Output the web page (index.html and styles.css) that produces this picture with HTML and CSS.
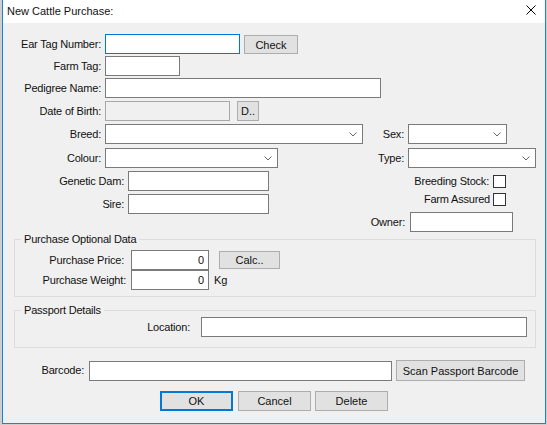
FILE: index.html
```html
<!DOCTYPE html>
<html>
<head>
<meta charset="utf-8">
<title>New Cattle Purchase</title>
<link rel="stylesheet" href="styles.css">
</head>
<body>
<div class="window">
  <div class="titlebar">
    <span class="title">New Cattle Purchase:</span>
    <svg class="close" width="10" height="10" viewBox="0 0 10 10"><path d="M0.5 0.5 L9.5 9.5 M9.5 0.5 L0.5 9.5" stroke="#000" stroke-width="1" fill="none"/></svg>
  </div>
  <div class="content">
    <div class="row r-ear">
      <label class="lbl lbl-main">Ear Tag Number:</label>
      <input class="inp focus w-ear" type="text">
      <button class="btn btn-check">Check</button>
    </div>
    <div class="row r-gap2">
      <label class="lbl lbl-main">Farm Tag:</label>
      <input class="inp w-farm" type="text">
    </div>
    <div class="row r-gap2">
      <label class="lbl lbl-main">Pedigree Name:</label>
      <input class="inp w-ped" type="text">
    </div>
    <div class="row r-gap3">
      <label class="lbl lbl-main">Date of Birth:</label>
      <input class="inp disabled w-dob" type="text" disabled>
      <button class="btn btn-d">D..</button>
    </div>
    <div class="cols">
      <div class="col-left">
        <div class="row">
          <label class="lbl lbl-main">Breed:</label>
          <div class="sel w-breed"><svg class="chev" width="8" height="5" viewBox="0 0 8 5"><polyline points="0.5,0.5 4,4 7.5,0.5" fill="none" stroke="#666" stroke-width="1"/></svg></div>
        </div>
        <div class="row r-gap4">
          <label class="lbl lbl-main">Colour:</label>
          <div class="sel w-colour"><svg class="chev" width="8" height="5" viewBox="0 0 8 5"><polyline points="0.5,0.5 4,4 7.5,0.5" fill="none" stroke="#666" stroke-width="1"/></svg></div>
        </div>
        <div class="row r-gap3">
          <label class="lbl lbl-dam">Genetic Dam:</label>
          <input class="inp w-dam" type="text">
        </div>
        <div class="row r-gap3">
          <label class="lbl lbl-dam">Sire:</label>
          <input class="inp w-dam" type="text">
        </div>
      </div>
      <div class="col-right">
        <div class="row">
          <label class="lbl lbl-side">Sex:</label>
          <div class="sel w-sex"><svg class="chev" width="8" height="5" viewBox="0 0 8 5"><polyline points="0.5,0.5 4,4 7.5,0.5" fill="none" stroke="#666" stroke-width="1"/></svg></div>
        </div>
        <div class="row r-gap4">
          <label class="lbl lbl-side">Type:</label>
          <div class="sel w-type"><svg class="chev" width="8" height="5" viewBox="0 0 8 5"><polyline points="0.5,0.5 4,4 7.5,0.5" fill="none" stroke="#666" stroke-width="1"/></svg></div>
        </div>
        <div class="row-chk r-gap7">
          <label class="lbl lbl-chk">Breeding Stock:</label>
          <input class="chk" type="checkbox">
        </div>
        <div class="row-chk r-gap5">
          <label class="lbl lbl-chk lbl-chk2">Farm Assured</label>
          <input class="chk" type="checkbox">
        </div>
        <div class="row r-gap6">
          <label class="lbl lbl-owner">Owner:</label>
          <input class="inp w-owner" type="text">
        </div>
      </div>
    </div>
    <fieldset class="group group-purchase">
      <legend class="legend">Purchase Optional Data</legend>
      <div class="row r-gap5">
        <label class="lbl lbl-price">Purchase Price:</label>
        <input class="inp num w-price" type="text" value="0">
        <button class="btn btn-calc">Calc..</button>
      </div>
      <div class="row">
        <label class="lbl lbl-weight">Purchase Weight:</label>
        <input class="inp num w-price" type="text" value="0">
        <span class="unit">Kg</span>
      </div>
    </fieldset>
    <fieldset class="group group-passport">
      <legend class="legend">Passport Details</legend>
      <div class="row r-gap1">
        <label class="lbl lbl-loc">Location:</label>
        <input class="inp w-loc" type="text">
      </div>
    </fieldset>
    <div class="row row-barcode">
      <label class="lbl lbl-barcode">Barcode:</label>
      <input class="inp w-barcode" type="text">
      <button class="btn btn-scan">Scan Passport Barcode</button>
    </div>
    <div class="row row-actions">
      <button class="btn btn-action btn-ok">OK</button>
      <button class="btn btn-action btn-cancel">Cancel</button>
      <button class="btn btn-action btn-delete">Delete</button>
    </div>
  </div>
</div>
</body>
</html>
```
FILE: styles.css
```css
* { box-sizing: border-box; }
html, body { margin: 0; padding: 0; }
body {
  background: #cfcfcf;
  width: 547px;
  height: 425px;
  overflow: hidden;
  font-family: "Liberation Sans", Arial, sans-serif;
  font-size: 11px;
  color: #000;
}
.window {
  margin-left: 2px;
  width: 544px;
  height: 424px;
  border: 1px solid #1883d7;
  border-top: none;
  background: #f0f0f0;
  overflow: hidden;
}
.titlebar {
  height: 23px;
  background: #fff;
  display: flex;
  align-items: center;
  justify-content: space-between;
  padding-left: 4px;
  padding-bottom: 2px;
}
.title { font-size: 11px; color: #111; }
.close { align-self: flex-start; margin-top: 5px; margin-right: 9px; flex: none; }
.content { height: 400px; letter-spacing: -0.2px; color: #111; }

.row { display: flex; align-items: center; height: 20px; }
.row-chk { display: flex; align-items: center; height: 13px; }
.r-ear { margin-top: 11px; }
.r-gap1 { margin-top: 1px; }
.r-gap2 { margin-top: 2px; }
.r-gap3 { margin-top: 3px; }
.r-gap4 { margin-top: 4px; }
.r-gap5 { margin-top: 5px; }
.r-gap6 { margin-top: 6px; }
.r-gap7 { margin-top: 7px; }

.lbl { flex: none; text-align: right; white-space: nowrap; line-height: 13px; }
.lbl-main { width: 102px; padding-right: 4px; }
.lbl-dam { width: 125px; padding-right: 4px; }
.lbl-side { width: 45px; padding-right: 4px; }
.lbl-owner { width: 47px; padding-right: 5px; }
.lbl-chk { width: 130px; padding-right: 4px; }
.lbl-chk2 { padding-right: 3px; }
.lbl-price { width: 116px; padding-right: 7px; }
.lbl-weight { width: 116px; padding-right: 5px; }
.lbl-loc { width: 186px; padding-right: 11px; }
.lbl-barcode { width: 86px; padding-right: 5px; }

.inp {
  flex: none;
  height: 20px;
  margin: 0;
  padding: 0 3px;
  background: #fff;
  border: 1px solid #7a7a7a;
  border-radius: 0;
  font: inherit;
  color: #111;
  outline: none;
}
.inp.focus { border-color: #0078d7; }
.inp.disabled { background: #f0f0f0; border-color: #a8a8a8; }
.inp.num { text-align: right; padding-right: 4px; }

.w-ear { width: 135px; }
.w-farm { width: 75px; }
.w-ped { width: 276px; }
.w-dob { width: 125px; }
.w-dam { width: 141px; }
.w-owner { width: 103px; }
.w-price { width: 78px; }
.w-loc { width: 326px; }
.w-barcode { width: 303px; }

.sel {
  flex: none;
  height: 20px;
  background: #fff;
  border: 1px solid #7a7a7a;
  display: flex;
  align-items: center;
  justify-content: flex-end;
  padding-right: 5px;
}
.chev { display: block; margin-top: 1px; }
.w-breed { width: 258px; }
.w-colour { width: 173px; }
.w-sex { width: 99px; }
.w-type { width: 128px; }

.cols { display: flex; margin-top: 3px; height: 108px; }
.col-left { width: 360px; flex: none; }
.col-right { flex: 1; }

.chk {
  appearance: none;
  -webkit-appearance: none;
  flex: none;
  width: 13px;
  height: 13px;
  margin: 0;
  background: #fff;
  border: 1px solid #333;
  border-radius: 0;
}

.btn {
  flex: none;
  margin: 0;
  padding: 0;
  font: inherit;
  color: #111;
  background: #e1e1e1;
  border: 1px solid #adadad;
  border-radius: 0;
  text-align: center;
}
.btn-check { width: 54px; height: 19px; margin-left: 4px; align-self: flex-start; margin-top: 1px; }
.btn-d { width: 22px; height: 20px; margin-left: 7px; }
.btn-calc { width: 61px; height: 18px; margin-left: 10px; }
.btn-scan { width: 129px; height: 21px; margin-left: 4px; }
.unit { margin-left: 5px; line-height: 13px; }

.group {
  margin: 0 0 0 11px;
  padding: 0 0 6px 0;
  width: 522px;
  border: 1px solid #dcdcdc;
  min-inline-size: 0;
}
.group-purchase { margin-top: 1px; }
.group-passport { margin-top: 7px; padding-bottom: 10px; }
.legend {
  padding: 0 3px;
  margin-left: 6px;
  line-height: 12px;
  font-size: 11px;
}

.row-barcode { margin-top: 12px; height: 21px; }
.row-barcode .w-barcode { align-self: flex-end; }
.row-actions { margin-top: 10px; padding-left: 157px; }
.btn-action { width: 73px; height: 20px; }
.btn-ok { border: 2px solid #0078d7; }
.btn-cancel { margin-left: 5px; }
.btn-delete { margin-left: 4px; }
```
